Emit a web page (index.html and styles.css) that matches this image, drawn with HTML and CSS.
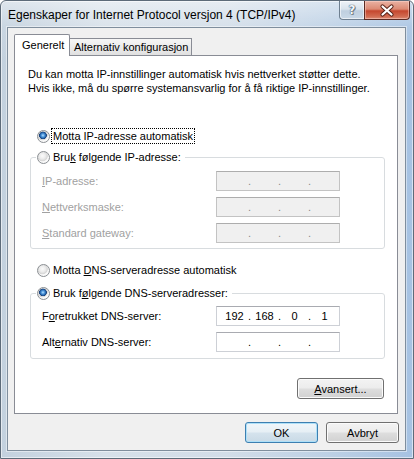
FILE: index.html
```html
<!DOCTYPE html>
<html lang="no">
<head>
<meta charset="utf-8">
<title>Egenskaper for Internet Protocol versjon 4 (TCP/IPv4)</title>
<link rel="stylesheet" href="styles.css">
</head>
<body>
<div class="window">
  <div class="titlebar">
    <span class="title">Egenskaper for Internet Protocol versjon 4 (TCP/IPv4)</span>
    <div class="caption-buttons">
      <div class="cbtn help"><span class="qmark">?</span></div>
      <div class="cbtn close">
        <svg width="44" height="17" viewBox="0 0 44 17">
          <path d="M17.5 4.5 L26.5 12.5 M26.5 4.5 L17.5 12.5" stroke="#5a2419" stroke-width="4.2" stroke-linecap="round" fill="none"/>
          <path d="M17.5 4.5 L26.5 12.5 M26.5 4.5 L17.5 12.5" stroke="#ffffff" stroke-width="2.2" stroke-linecap="round" fill="none"/>
        </svg>
      </div>
    </div>
  </div>
  <div class="client">
    <div class="tabs">
      <div class="tab active">Generelt</div>
      <div class="tab">Alternativ konfigurasjon</div>
    </div>
    <div class="panel">
      <p class="intro">Du kan motta IP-innstillinger automatisk hvis nettverket støtter dette.<br>Hvis ikke, må du spørre systemansvarlig for å få riktige IP-innstillinger.</p>

      <div class="radio-row ip-auto"><span class="radio checked"></span><span class="rlabel focus">Motta IP-adresse automatisk</span></div>

      <fieldset class="group ip-group">
        <legend><span class="legend-inner"><span class="radio"></span><span class="rlabel">Bru<u>k</u> følgende IP-adresse:</span></span></legend>
        <div class="field disabled">
          <span class="flabel"><u>I</u>P-adresse:</span>
          <div class="ipbox off"><span class="seg"></span><span class="dot">.</span><span class="seg"></span><span class="dot">.</span><span class="seg"></span><span class="dot">.</span><span class="seg"></span></div>
        </div>
        <div class="field disabled">
          <span class="flabel"><u>N</u>ettverksmaske:</span>
          <div class="ipbox off"><span class="seg"></span><span class="dot">.</span><span class="seg"></span><span class="dot">.</span><span class="seg"></span><span class="dot">.</span><span class="seg"></span></div>
        </div>
        <div class="field disabled">
          <span class="flabel"><u>S</u>tandard gateway:</span>
          <div class="ipbox off"><span class="seg"></span><span class="dot">.</span><span class="seg"></span><span class="dot">.</span><span class="seg"></span><span class="dot">.</span><span class="seg"></span></div>
        </div>
      </fieldset>

      <div class="radio-row dns-auto"><span class="radio"></span><span class="rlabel">Motta <u>D</u>NS-serveradresse automatisk</span></div>

      <fieldset class="group dns-group">
        <legend><span class="legend-inner"><span class="radio checked"></span><span class="rlabel">Bruk f<u>ø</u>lgende DNS-serveradresser:</span></span></legend>
        <div class="field">
          <span class="flabel">F<u>o</u>retrukket DNS-server:</span>
          <div class="ipbox on"><span class="seg">192</span><span class="dot">.</span><span class="seg">168</span><span class="dot">.</span><span class="seg">0</span><span class="dot">.</span><span class="seg">1</span></div>
        </div>
        <div class="field">
          <span class="flabel">Alt<u>e</u>rnativ DNS-server:</span>
          <div class="ipbox on"><span class="seg"></span><span class="dot">.</span><span class="seg"></span><span class="dot">.</span><span class="seg"></span><span class="dot">.</span><span class="seg"></span></div>
        </div>
      </fieldset>

      <div class="adv-row"><button class="btn adv" type="button"><u>A</u>vansert...</button></div>
    </div>
    <div class="footer">
      <button class="btn default" type="button">OK</button>
      <button class="btn" type="button">Avbryt</button>
    </div>
  </div>
</div>
</body>
</html>
```
FILE: styles.css
```css
html, body {
  margin: 0;
  padding: 0;
  background: #ffffff;
}

body {
  font-family: "Liberation Sans", Arial, sans-serif;
  font-size: 11px;
  line-height: 14px;
  color: #000;
}

u {
  text-decoration: underline;
  text-underline-offset: 1px;
}

/* ---------- window frame ---------- */
.window {
  width: 414px;
  height: 459px;
  box-sizing: border-box;
  border: 1px solid #5d6b79;
  border-radius: 6px 6px 0 0;
  background:
    linear-gradient(180deg, rgba(255,255,255,0.45) 0px, rgba(255,255,255,0.1) 26px, rgba(255,255,255,0) 60px),
    linear-gradient(90deg, #c3d1de 0%, #d6e0e9 25%, #d2dde8 55%, #bcd0e5 80%, #a6c2e2 100%);
  box-shadow: inset 0 0 0 1px rgba(255,255,255,0.55);
  overflow: hidden;
}

.titlebar {
  height: 26px;
  display: flex;
  align-items: flex-start;
}

.title {
  padding: 2px 0 0 7px;
  line-height: 24px;
  font-size: 12px;
  color: #000;
  white-space: nowrap;
}

.caption-buttons {
  margin-left: auto;
  margin-right: 3px;
  display: flex;
}

.cbtn {
  height: 19px;
  box-sizing: border-box;
  display: flex;
  align-items: center;
  justify-content: center;
}

.help {
  width: 25px;
  border: 1px solid #6e7f90;
  border-top: none;
  border-right: none;
  border-radius: 0 0 0 4px;
  background: linear-gradient(180deg, #eef3f8 0%, #d9e3ec 45%, #bfcfdf 55%, #cad9e7 100%);
  box-shadow: inset 0 0 0 1px rgba(255,255,255,0.6);
}

.qmark {
  font-family: "DejaVu Sans", sans-serif;
  font-weight: bold;
  font-size: 12px;
  line-height: 12px;
  color: #f4f7fa;
  text-shadow: 0 0 1px #3d4c5b, 0 0 1px #3d4c5b, 1px 1px 0 #7d8c9a;
}

.close {
  width: 46px;
  border: 1px solid #5b2a22;
  border-top: none;
  border-radius: 0 0 4px 0;
  background: linear-gradient(180deg, #eab2a3 0%, #dc8a74 45%, #c5472e 55%, #d16a50 85%, #dc8c74 100%);
  box-shadow: inset 0 0 0 1px rgba(255,220,210,0.45);
}

/* ---------- client area ---------- */
.client {
  margin: 0 7px 0 6px;
  height: 424px;
  box-sizing: border-box;
  border: 1px solid #7f8e9d;
  background: #f0f0f0;
  box-shadow: 0 0 0 1px rgba(255,255,255,0.45);
}

.tabs {
  display: flex;
  align-items: flex-end;
  height: 21px;
  padding: 6px 0 0 6px;
}

.tab {
  box-sizing: border-box;
  border: 1px solid #898c95;
  border-bottom: none;
  white-space: nowrap;
  display: flex;
  align-items: center;
}

.tab.active {
  position: relative;
  z-index: 1;
  width: 56px;
  height: 22px;
  margin-bottom: -1px;
  padding-left: 7px;
  padding-bottom: 1px;
  background: #fff;
  border-radius: 2px 2px 0 0;
}

.tab:not(.active) {
  width: 123px;
  height: 17px;
  padding-left: 5px;
  margin-left: -1px;
  border-left: none;
  background: linear-gradient(180deg, #f6f6f6 0%, #ebebeb 50%, #e0e0e0 100%);
}

.panel {
  margin: 0 7px 0 6px;
  height: 359px;
  box-sizing: border-box;
  border: 1px solid #898c95;
  background: #fff;
  overflow: hidden;
}

.intro {
  margin: 11px 0 0 13px;
  white-space: nowrap;
}

/* ---------- radios ---------- */
.radio-row {
  display: flex;
  align-items: center;
  height: 16px;
  padding-left: 22px;
}

.ip-auto { margin-top: 33px; }
.dns-auto { margin-top: 13px; }

.radio {
  flex: none;
  width: 13px;
  height: 13px;
  box-sizing: border-box;
  border-radius: 50%;
  border: 1px solid #8b8f93;
  background: radial-gradient(circle at 40% 35%, #fbfbfb 0px, #ececec 3px, #d6d6d6 5px, #f2f2f2 5.6px, #fafafa 6px);
}

.radio.checked {
  background:
    radial-gradient(circle at 45% 40%, #b9e0ff 0px, #5ea5e4 1.3px, #2a6db6 2.6px, #173f77 3.6px, rgba(23,63,119,0) 4.1px),
    radial-gradient(circle at 40% 35%, #fbfbfb 0px, #ececec 3px, #d6d6d6 5px, #f2f2f2 5.6px, #fafafa 6px);
}

.rlabel {
  margin-left: 2px;
  padding: 0 1px;
  white-space: nowrap;
  line-height: 14px;
}

.focus {
  outline: 1px dotted #000;
  outline-offset: 0;
}

/* ---------- group boxes ---------- */
.group {
  margin: 5px 12px 0 15px;
  padding: 6px 0 5px 0;
  border: 1px solid #d8dcdf;
  border-radius: 3px;
  min-width: 0;
}

.dns-group {
  margin-top: 7px;
  padding: 5px 0 6px 0;
}

.group legend {
  margin-left: 5px;
  padding: 0 3px 0 1px;
  height: 16px;
}

.legend-inner {
  display: flex;
  align-items: center;
  height: 16px;
}

.field {
  display: flex;
  align-items: center;
  height: 20px;
  padding-left: 11px;
}

.field + .field { margin-top: 6px; }

.flabel {
  width: 174px;
  flex: none;
  white-space: nowrap;
}

.field.disabled .flabel { color: #a1a1a1; }

.ipbox {
  width: 124px;
  height: 20px;
  box-sizing: border-box;
  display: flex;
  align-items: center;
  padding-left: 4px;
}

.ipbox.off {
  background: #f0f0f0;
  border: 1px solid #c3c3c3;
  border-top-color: #adadad;
  color: #8a8a8a;
}

.ipbox.on {
  background: #fff;
  border: 1px solid #cdd0d6;
  border-top-color: #a9abb1;
  color: #000;
}

.seg {
  width: 27px;
  text-align: center;
}

.dot {
  width: 3px;
  text-align: center;
}

/* ---------- buttons ---------- */
.btn {
  font-family: "Liberation Sans", Arial, sans-serif;
  font-size: 11px;
  color: #000;
  height: 21px;
  padding: 0;
  box-sizing: border-box;
  border: 1px solid #707070;
  border-radius: 3px;
  background: linear-gradient(180deg, #f3f3f3 0%, #ececec 48%, #dedede 52%, #d1d1d1 100%);
  box-shadow: inset 0 0 0 1px #fbfbfb;
}

.adv-row {
  display: flex;
  justify-content: flex-end;
  margin-top: 19px;
  padding-right: 13px;
}

.btn.adv { width: 87px; }

.footer {
  display: flex;
  justify-content: flex-end;
  gap: 8px;
  margin-top: 8px;
  padding-right: 6px;
}

.footer .btn { width: 73px; }

.btn.default {
  border-color: #3c7fb1;
  background: linear-gradient(180deg, #f0f6fa 0%, #e6eff5 48%, #d5e3ed 52%, #c9dae6 100%);
  box-shadow: inset 0 0 0 1px #aee0f8;
}
```
